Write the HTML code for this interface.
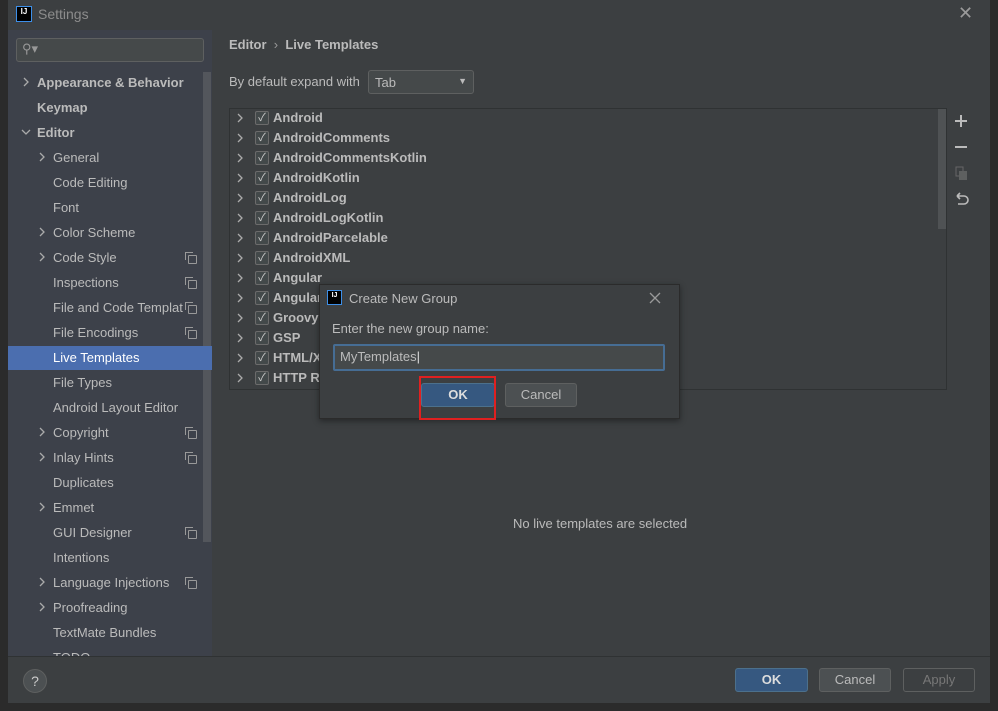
<html><head><style>
body{margin:0;width:998px;height:711px;background:#2b2b2b;font-family:"Liberation Sans","Noto Sans CJK SC",sans-serif;font-size:13px;color:#bbbbbb;position:relative;overflow:hidden}
.a{position:absolute}
.win{left:8px;top:0;width:982px;height:703px;background:#3c3f41}
.side{left:8px;top:30px;width:204px;height:626px;background:#3d414a;overflow:hidden}
.it{position:absolute;white-space:nowrap;height:25px;line-height:25px}
.b{font-weight:bold}
.cb{position:absolute;width:12px;height:12px;border:1px solid #6b6b6b;border-radius:2px;background:#43494a;color:#ccc;font-size:11px;line-height:12px;text-align:center}
.btn{position:absolute;height:22px;line-height:22px;text-align:center;border-radius:3px;font-size:13px}
svg.r{position:absolute;width:8px;height:10px}
.cp{position:absolute;width:7px;height:7px;border:1px solid #999;border-radius:1px}
.cp:after{content:"";position:absolute;left:-4px;top:-4px;width:7px;height:7px;border-left:1px solid #999;border-top:1px solid #999}
</style></head><body>
<div class="a win"></div>
<div class="a" style="left:16px;top:6px;width:14px;height:14px;background:#000;border:1px solid #3d8fe8;color:#fff;font-size:8px;font-weight:bold;line-height:10px;text-align:center">IJ</div>
<div class="a" style="left:38px;top:6px;color:#8c8c8c;font-size:14px">Settings</div>
<div class="a" style="left:958px;top:3px;color:#9a9a9a;font-size:18px">✕</div>
<div class="a side">
<div class="a" style="left:8px;top:8px;width:186px;height:22px;border:1px solid #5e6060;border-radius:3px;background:#45494a"></div>
<div class="a" style="left:14px;top:11px;color:#999;font-size:13px">⚲▾</div>
<div class="a" style="left:195px;top:42px;width:8px;height:470px;background:#53565c"></div>
<div class="a" style="left:0;top:316px;width:204px;height:24px;background:#4b6eaf"></div>
<div class="a" style="left:0;top:0;width:204px;height:626px">
<div class="it b" style="left:29px;top:40px">Appearance &amp; Behavior</div><svg class="r" style="left:14px;top:47px"><polyline points="2,1 6,5 2,9" fill="none" stroke="#aaa" stroke-width="1.3"/></svg>
<div class="it b" style="left:29px;top:65px">Keymap</div>
<div class="it b" style="left:29px;top:90px">Editor</div><svg class="r" style="left:13px;top:98px;width:10px"><polyline points="1,2 5,6 9,2" fill="none" stroke="#aaa" stroke-width="1.3"/></svg>
<div class="it" style="left:45px;top:115px">General</div><svg class="r" style="left:30px;top:122px"><polyline points="2,1 6,5 2,9" fill="none" stroke="#aaa" stroke-width="1.3"/></svg>
<div class="it" style="left:45px;top:140px">Code Editing</div>
<div class="it" style="left:45px;top:165px">Font</div>
<div class="it" style="left:45px;top:190px">Color Scheme</div><svg class="r" style="left:30px;top:197px"><polyline points="2,1 6,5 2,9" fill="none" stroke="#aaa" stroke-width="1.3"/></svg>
<div class="it" style="left:45px;top:215px">Code Style</div><svg class="r" style="left:30px;top:222px"><polyline points="2,1 6,5 2,9" fill="none" stroke="#aaa" stroke-width="1.3"/></svg>
<div class="it" style="left:45px;top:240px">Inspections</div>
<div class="it" style="left:45px;top:265px;width:130px;overflow:hidden">File and Code Templates</div>
<div class="it" style="left:45px;top:290px">File Encodings</div>
<div class="it" style="left:45px;top:315px;color:#fff">Live Templates</div>
<div class="it" style="left:45px;top:340px">File Types</div>
<div class="it" style="left:45px;top:365px">Android Layout Editor</div>
<div class="it" style="left:45px;top:390px">Copyright</div><svg class="r" style="left:30px;top:397px"><polyline points="2,1 6,5 2,9" fill="none" stroke="#aaa" stroke-width="1.3"/></svg>
<div class="it" style="left:45px;top:415px">Inlay Hints</div><svg class="r" style="left:30px;top:422px"><polyline points="2,1 6,5 2,9" fill="none" stroke="#aaa" stroke-width="1.3"/></svg>
<div class="it" style="left:45px;top:440px">Duplicates</div>
<div class="it" style="left:45px;top:465px">Emmet</div><svg class="r" style="left:30px;top:472px"><polyline points="2,1 6,5 2,9" fill="none" stroke="#aaa" stroke-width="1.3"/></svg>
<div class="it" style="left:45px;top:490px">GUI Designer</div>
<div class="it" style="left:45px;top:515px">Intentions</div>
<div class="it" style="left:45px;top:540px">Language Injections</div><svg class="r" style="left:30px;top:547px"><polyline points="2,1 6,5 2,9" fill="none" stroke="#aaa" stroke-width="1.3"/></svg>
<div class="it" style="left:45px;top:565px">Proofreading</div><svg class="r" style="left:30px;top:572px"><polyline points="2,1 6,5 2,9" fill="none" stroke="#aaa" stroke-width="1.3"/></svg>
<div class="it" style="left:45px;top:590px">TextMate Bundles</div>
<div class="it" style="left:45px;top:615px">TODO</div>
<div class="cp" style="left:180px;top:225px"></div><div class="cp" style="left:180px;top:250px"></div><div class="cp" style="left:180px;top:275px"></div><div class="cp" style="left:180px;top:300px"></div><div class="cp" style="left:180px;top:400px"></div><div class="cp" style="left:180px;top:425px"></div><div class="cp" style="left:180px;top:500px"></div><div class="cp" style="left:180px;top:550px"></div>
</div>
</div>
<div class="a b" style="left:229px;top:37px">Editor &nbsp;<span style="font-weight:normal;color:#999">›</span>&nbsp; Live Templates</div>
<div class="a" style="left:229px;top:74px">By default expand with</div>
<div class="a" style="left:368px;top:70px;width:104px;height:22px;border:1px solid #5e6060;border-radius:3px;background:#45494a"><span style="position:absolute;left:6px;top:4px">Tab</span><span style="position:absolute;right:6px;top:5px;font-size:9px">▼</span></div>
<div class="a" style="left:229px;top:108px;width:716px;height:280px;border:1px solid #2f3233;background:#3c3f41"></div>
<div class="a" style="left:938px;top:109px;width:9px;height:120px;background:#4f5254"></div>
<div class="a" style="left:946px;top:108px;width:1px;height:281px;background:#2f3233"></div>
<svg class="a" style="left:950px;top:110px" width="22" height="100"><path d="M11 5v12M5 11h12" stroke="#bbb" stroke-width="2"/><path d="M5 37h12" stroke="#bbb" stroke-width="2"/><rect x="6" y="57" width="7" height="9" fill="none" stroke="#666"/><rect x="9" y="61" width="8" height="9" fill="#5e6060"/><path d="M7 86h7a4 4 0 0 1 0 8h-6M7 86l3-3M7 86l3 3" fill="none" stroke="#bbb" stroke-width="1.6"/></svg>
<div class="a" style="left:0;top:0">
<div class="cb" style="left:255px;top:111px">✓</div><div class="it b" style="left:273px;top:105px">Android</div>
<div class="cb" style="left:255px;top:131px">✓</div><div class="it b" style="left:273px;top:125px">AndroidComments</div>
<div class="cb" style="left:255px;top:151px">✓</div><div class="it b" style="left:273px;top:145px">AndroidCommentsKotlin</div>
<div class="cb" style="left:255px;top:171px">✓</div><div class="it b" style="left:273px;top:165px">AndroidKotlin</div>
<div class="cb" style="left:255px;top:191px">✓</div><div class="it b" style="left:273px;top:185px">AndroidLog</div>
<div class="cb" style="left:255px;top:211px">✓</div><div class="it b" style="left:273px;top:205px">AndroidLogKotlin</div>
<div class="cb" style="left:255px;top:231px">✓</div><div class="it b" style="left:273px;top:225px">AndroidParcelable</div>
<div class="cb" style="left:255px;top:251px">✓</div><div class="it b" style="left:273px;top:245px">AndroidXML</div>
<div class="cb" style="left:255px;top:271px">✓</div><div class="it b" style="left:273px;top:265px">Angular</div>
<div class="cb" style="left:255px;top:291px">✓</div><div class="it b" style="left:273px;top:285px">AngularJS</div>
<div class="cb" style="left:255px;top:311px">✓</div><div class="it b" style="left:273px;top:305px">Groovy</div>
<div class="cb" style="left:255px;top:331px">✓</div><div class="it b" style="left:273px;top:325px">GSP</div>
<div class="cb" style="left:255px;top:351px">✓</div><div class="it b" style="left:273px;top:345px">HTML/XML</div>
<div class="cb" style="left:255px;top:371px">✓</div><div class="it b" style="left:273px;top:365px">HTTP Request</div>
</div>
<svg class="a" style="left:236px;top:110px" width="10" height="280" fill="none" stroke="#aaa" stroke-width="1.3">
<polyline points="2,4 6,8 2,12"/><polyline points="2,24 6,28 2,32"/><polyline points="2,44 6,48 2,52"/><polyline points="2,64 6,68 2,72"/><polyline points="2,84 6,88 2,92"/><polyline points="2,104 6,108 2,112"/><polyline points="2,124 6,128 2,132"/><polyline points="2,144 6,148 2,152"/><polyline points="2,164 6,168 2,172"/><polyline points="2,184 6,188 2,192"/><polyline points="2,204 6,208 2,212"/><polyline points="2,224 6,228 2,232"/><polyline points="2,244 6,248 2,252"/><polyline points="2,264 6,268 2,272"/>
</svg>
<div class="a" style="left:513px;top:516px">No live templates are selected</div>
<!-- dialog -->
<div class="a" style="left:319px;top:284px;width:359px;height:133px;background:#3c3f41;border:1px solid #2b2b2b;box-shadow:0 2px 6px rgba(0,0,0,.4)"></div>
<div class="a" style="left:327px;top:290px;width:13px;height:13px;background:#000;border:1px solid #3d8fe8;color:#fff;font-size:7px;font-weight:bold;line-height:9px;text-align:center">IJ</div>
<div class="a" style="left:349px;top:291px">Create New Group</div>
<svg class="a" style="left:649px;top:292px" width="12" height="12"><path d="M1 1L11 11M11 1L1 11" stroke="#9a9a9a" stroke-width="1.3"/></svg>
<div class="a" style="left:332px;top:321px">Enter the new group name:</div>
<div class="a" style="left:333px;top:344px;width:328px;height:23px;border:2px solid #466d94;border-radius:2px;background:#45494a"></div>
<div class="a" style="left:340px;top:349px">MyTemplates<span style="color:#ddd">|</span></div>
<div class="btn b" style="left:421px;top:383px;width:72px;background:#365880;border:1px solid #4c708c;color:#ddd">OK</div>
<div class="a" style="left:419px;top:376px;width:73px;height:40px;border:2px solid #e02020"></div>
<div class="btn" style="left:505px;top:383px;width:70px;background:#4c5052;border:1px solid #5e6060">Cancel</div>
<!-- footer -->
<div class="a" style="left:8px;top:656px;width:982px;height:1px;background:#2f3233"></div>
<div class="a" style="left:23px;top:669px;width:22px;height:22px;border-radius:50%;background:#4c5052;border:1px solid #5e6060;text-align:center;line-height:22px;color:#ccc;font-size:14px">?</div>
<div class="btn b" style="left:735px;top:668px;width:71px;background:#365880;border:1px solid #4c708c;color:#ddd">OK</div>
<div class="btn" style="left:819px;top:668px;width:70px;background:#4c5052;border:1px solid #5e6060">Cancel</div>
<div class="btn" style="left:903px;top:668px;width:70px;border:1px solid #5e6060;color:#777">Apply</div>
</body></html>
